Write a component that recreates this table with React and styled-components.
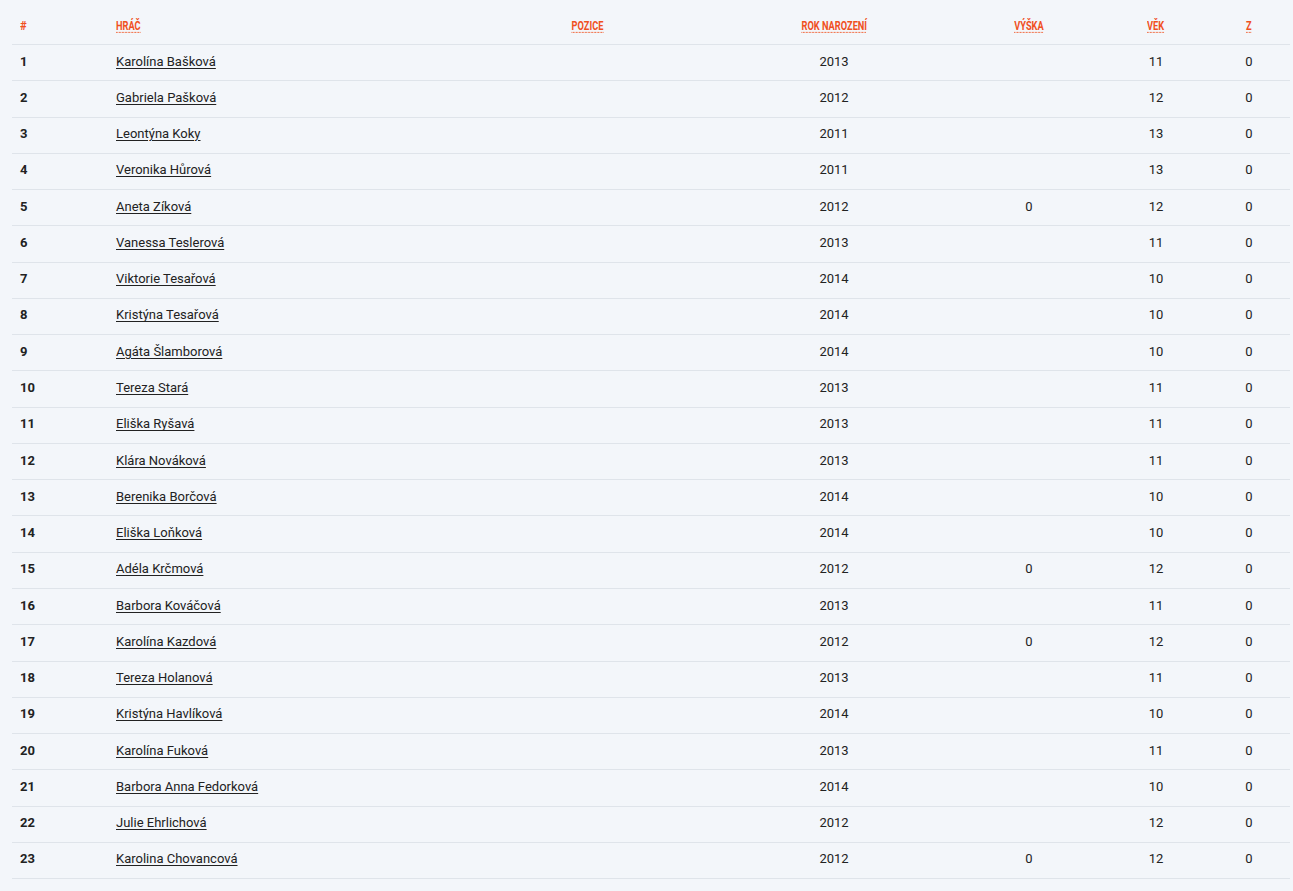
import styled, { createGlobalStyle } from "styled-components";

const GlobalStyle = createGlobalStyle`
  body {
    margin: 0;
    background: #f3f6fa;
    font-family: Roboto, "Liberation Sans", sans-serif;
    color: #222;
  }
`;

const cols = "96px 352px 254px 240px 150px 104px 82px";

const Page = styled.main`
  padding: 8px 3px 0 12px;
`;

const Table = styled.div`
  width: 1278px;
`;

const Row = styled.div`
  display: grid;
  grid-template-columns: ${cols};
  align-items: center;
  height: ${(p) => (p.$head ? "37px" : "36.27px")};
  box-sizing: border-box;
  border-bottom: 1px solid #dfe4ea;
`;

const Cell = styled.div`
  padding: 0 8px 3px;
  font-size: 13px;
  text-align: ${(p) => p.$align || "left"};
  font-weight: ${(p) => (p.$bold ? 700 : 400)};
`;

const HeadCell = styled(Cell)`
  font-family: Roboto, "Liberation Sans", sans-serif;
  font-weight: 700;
  font-size: 12.5px;
  padding-bottom: 2px;
  color: #f0501e;
`;

const Abbr = styled.span`
  display: inline-block;
  transform: scaleX(${(p) => (p.$plain ? 0.9 : 0.74)});
  transform-origin: ${(p) => (p.$left ? "left" : "center")} center;
  text-decoration: ${(p) => (p.$plain ? "none" : "underline dotted #f0501e")};
  text-underline-offset: 2px;
`;

const NameLink = styled.a`
  color: #222;
  text-decoration: underline;
  text-underline-offset: 2px;
`;

const players = [
  ["Karolína Bašková", 2013, "", 11],
  ["Gabriela Pašková", 2012, "", 12],
  ["Leontýna Koky", 2011, "", 13],
  ["Veronika Hůrová", 2011, "", 13],
  ["Aneta Zíková", 2012, "0", 12],
  ["Vanessa Teslerová", 2013, "", 11],
  ["Viktorie Tesařová", 2014, "", 10],
  ["Kristýna Tesařová", 2014, "", 10],
  ["Agáta Šlamborová", 2014, "", 10],
  ["Tereza Stará", 2013, "", 11],
  ["Eliška Ryšavá", 2013, "", 11],
  ["Klára Nováková", 2013, "", 11],
  ["Berenika Borčová", 2014, "", 10],
  ["Eliška Loňková", 2014, "", 10],
  ["Adéla Krčmová", 2012, "0", 12],
  ["Barbora Kováčová", 2013, "", 11],
  ["Karolína Kazdová", 2012, "0", 12],
  ["Tereza Holanová", 2013, "", 11],
  ["Kristýna Havlíková", 2014, "", 10],
  ["Karolína Fuková", 2013, "", 11],
  ["Barbora Anna Fedorková", 2014, "", 10],
  ["Julie Ehrlichová", 2012, "", 12],
  ["Karolina Chovancová", 2012, "0", 12],
];

export default function App() {
  return (
    <Page>
      <GlobalStyle />
      <Table>
        <Row $head>
          <HeadCell><Abbr $left $plain>#</Abbr></HeadCell>
          <HeadCell><Abbr $left>HRÁČ</Abbr></HeadCell>
          <HeadCell $align="center"><Abbr>POZICE</Abbr></HeadCell>
          <HeadCell $align="center"><Abbr>ROK NAROZENÍ</Abbr></HeadCell>
          <HeadCell $align="center"><Abbr>VÝŠKA</Abbr></HeadCell>
          <HeadCell $align="center"><Abbr>VĚK</Abbr></HeadCell>
          <HeadCell $align="center"><Abbr>Z</Abbr></HeadCell>
        </Row>
        {players.map(([name, year, height, age], i) => (
          <Row key={name}>
            <Cell $bold>{i + 1}</Cell>
            <Cell><NameLink href="#">{name}</NameLink></Cell>
            <Cell $align="center"></Cell>
            <Cell $align="center">{year}</Cell>
            <Cell $align="center">{height}</Cell>
            <Cell $align="center">{age}</Cell>
            <Cell $align="center">0</Cell>
          </Row>
        ))}
      </Table>
    </Page>
  );
}
